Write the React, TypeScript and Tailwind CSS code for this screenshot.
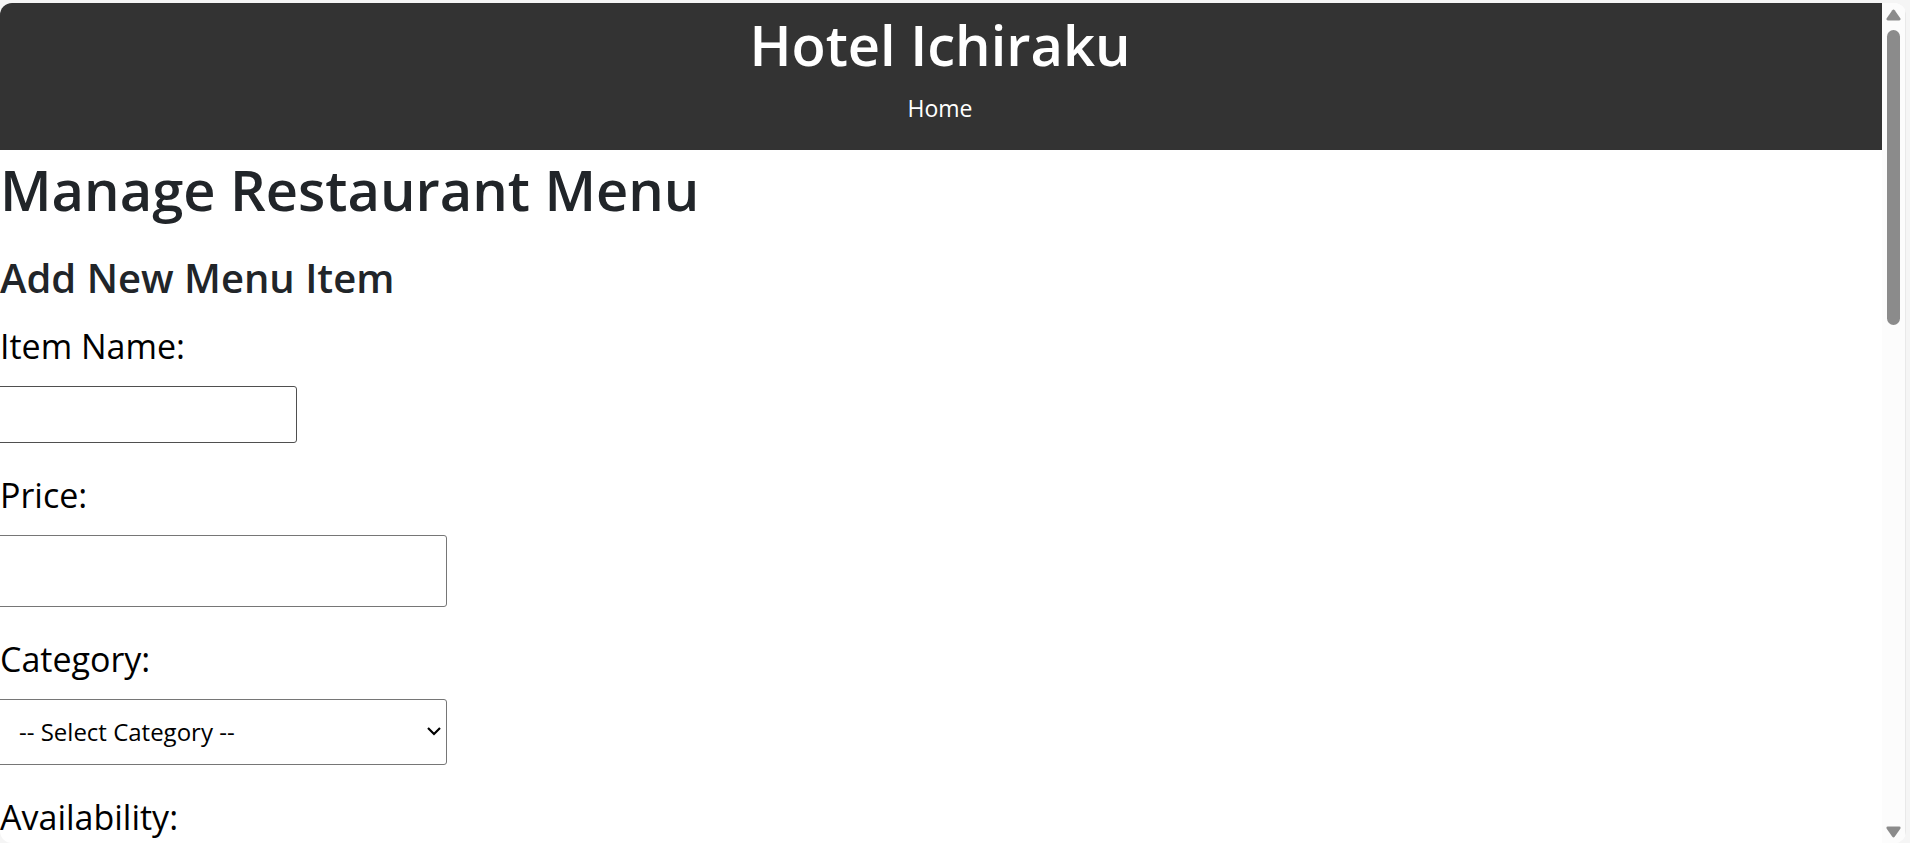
import React from 'react';

const labelClass = 'block pl-1 text-[34px] leading-[52px] text-black';
const fieldClass = 'mt-[14px] block rounded-[3px] border bg-white text-2xl text-black outline-none';

function Arrow({ down = false }: { down?: boolean }) {
  return (
    <svg
      viewBox="0 0 15 12"
      className={down ? 'h-3 w-[15px] rotate-180' : 'h-3 w-[15px]'}
      aria-hidden="true"
    >
      <path
        d="M6.3 1.2Q7.5 -0.2 8.7 1.2L14.3 9.2Q15.2 11.2 13.2 11.4H1.8Q-0.2 11.2 0.7 9.2Z"
        fill="#8b8b8b"
      />
    </svg>
  );
}

function ScrollRail() {
  return (
    <div className="flex w-6 shrink-0 flex-col items-center border-r border-[#e9e9e9] bg-[#fcfcfc] pt-[6px] pb-[5px]">
      <Arrow />
      <div className="flex w-full flex-1 justify-center pt-[9px]">
        <div className="h-[37%] w-[13px] rounded-full bg-[#8b8b8b]" />
      </div>
      <Arrow down />
    </div>
  );
}

export default function App() {
  return (
    <div className="h-screen overflow-hidden bg-[#f5f5f5] pt-[3px] pr-1 font-['Open_Sans','Noto_Sans',sans-serif]">
      <div className="flex h-full overflow-hidden rounded-xl bg-white">
        <div className="min-w-0 flex-1 overflow-hidden">
          <header className="flex h-[147px] flex-col items-center bg-[#333333] pr-[2px] text-white">
            <h1 className="pt-[5px] text-[56px] leading-[72px] font-semibold">Hotel Ichiraku</h1>
            <nav className="pt-[10px]">
              <a href="#" className="text-[23px] leading-9">Home</a>
            </nav>
          </header>
          <main className="-ml-1 pt-[3px]">
            <h1 className="pl-1 text-[56px] leading-[72px] font-semibold text-[#212529]">
              Manage Restaurant Menu
            </h1>
            <h2 className="mt-7 mb-[17px] pl-1 text-[40px] leading-[50px] font-semibold text-[#212529]">
              Add New Menu Item
            </h2>
            <form className="flex flex-col gap-[26px]">
              <div>
                <label htmlFor="item-name" className={labelClass}>Item Name:</label>
                <input
                  id="item-name"
                  type="text"
                  className={`${fieldClass} h-[57px] w-[301px] border-[#4f4f4f] px-3`}
                />
              </div>
              <div>
                <label htmlFor="price" className={labelClass}>Price:</label>
                <input
                  id="price"
                  type="text"
                  inputMode="decimal"
                  className={`${fieldClass} h-[72px] w-[451px] border-[#767676] px-5`}
                />
              </div>
              <div>
                <label htmlFor="category" className={labelClass}>Category:</label>
                <div className="grid w-[451px] items-center">
                  <select
                    id="category"
                    className={`${fieldClass} col-start-1 row-start-1 h-[66px] w-full appearance-none border-[#767676] pr-9 pl-[22px]`}
                  >
                    <option>-- Select Category --</option>
                    <option>Starters</option>
                    <option>Main Course</option>
                  </select>
                  <svg
                    viewBox="0 0 14 10"
                    className="pointer-events-none col-start-1 row-start-1 mt-3 mr-[6px] h-[10px] w-[14px] justify-self-end"
                    fill="none"
                    stroke="#000"
                    strokeWidth="2.2"
                    aria-hidden="true"
                  >
                    <path d="M1 2l6 6 6-6" />
                  </svg>
                </div>
              </div>
              <div>
                <label htmlFor="availability" className={labelClass}>Availability:</label>
                <select
                  id="availability"
                  className={`${fieldClass} h-[66px] w-[451px] border-[#767676] px-[22px]`}
                >
                  <option>Available</option>
                </select>
              </div>
            </form>
          </main>
        </div>
        <ScrollRail />
      </div>
    </div>
  );
}
